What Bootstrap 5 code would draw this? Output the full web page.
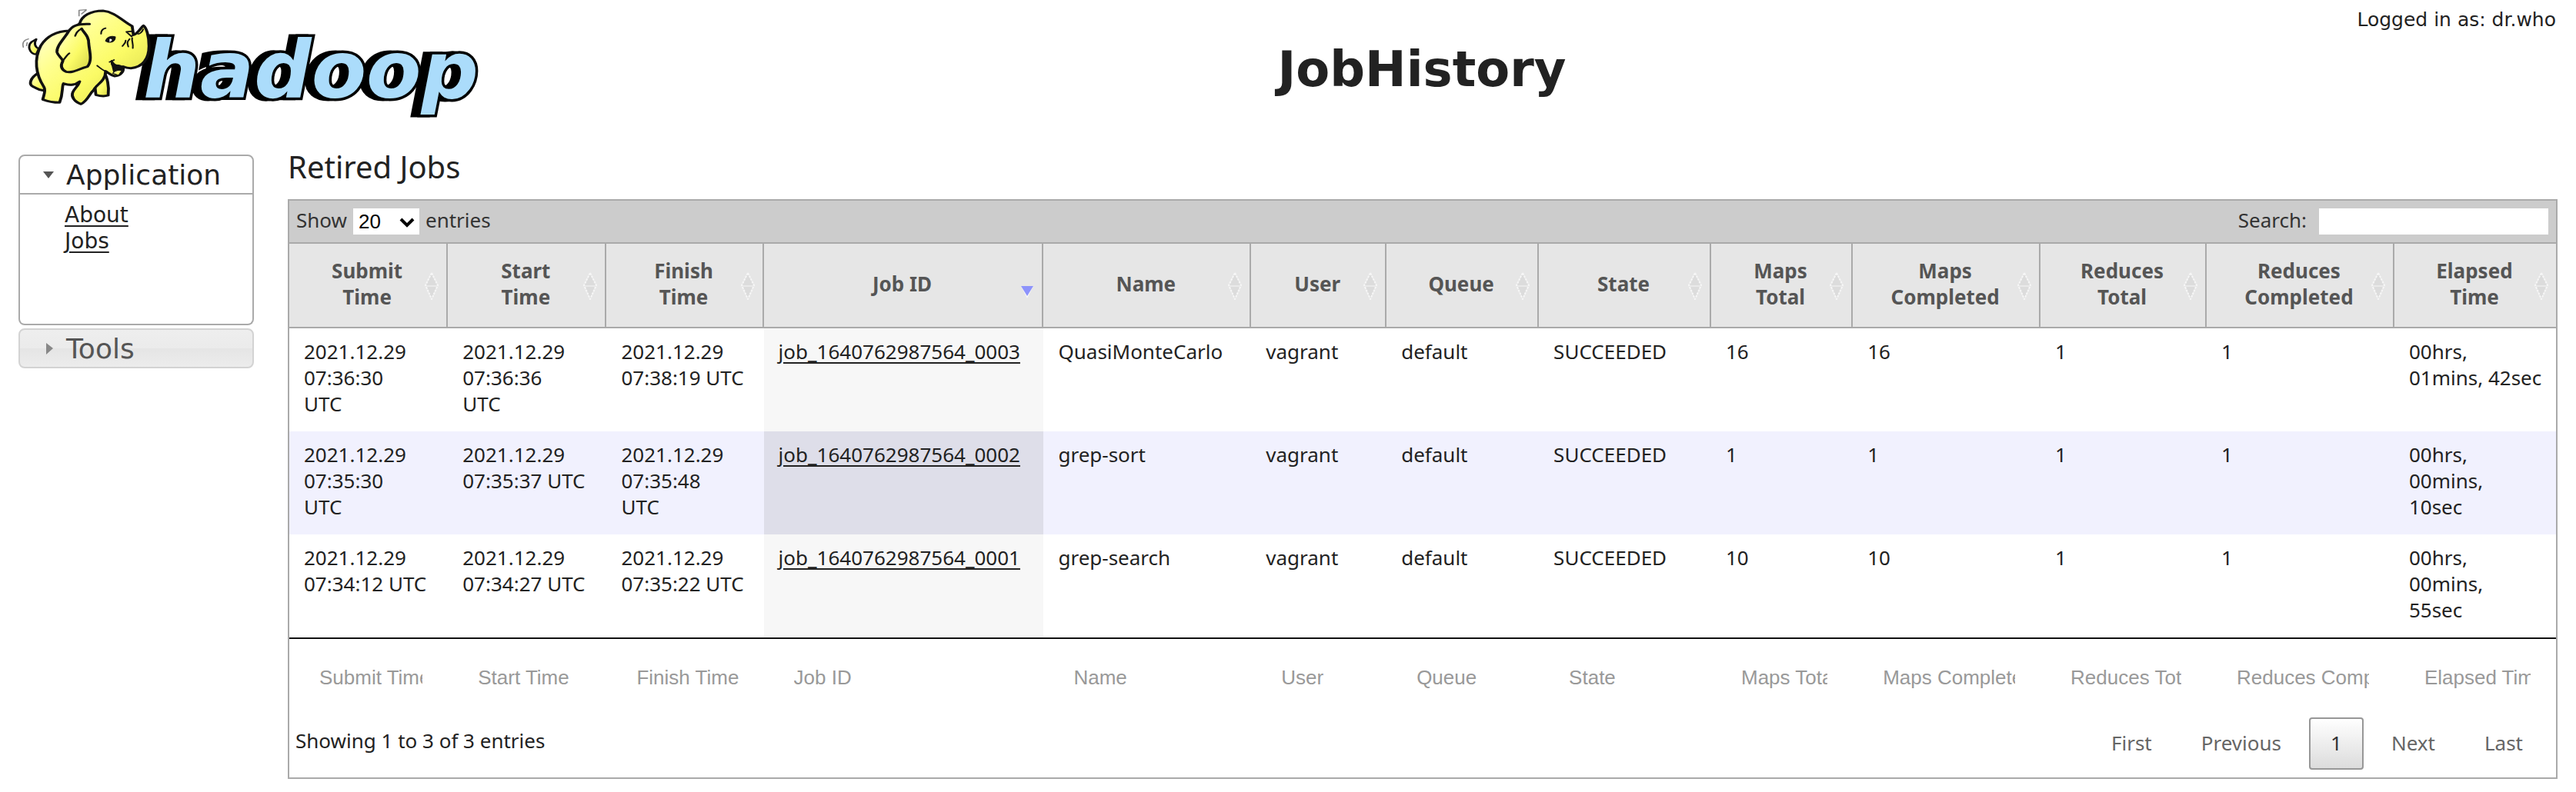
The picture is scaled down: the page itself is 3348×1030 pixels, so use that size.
<!DOCTYPE html>
<html lang="en">
<head>
<meta charset="utf-8">
<meta name="viewport" content="width=device-width, initial-scale=1">
<title>JobHistory</title>
<link href="https://cdn.jsdelivr.net/npm/bootstrap@5.3.0/dist/css/bootstrap.min.css" rel="stylesheet">
<style>
  body { font-family: "Noto Sans", "Open Sans", sans-serif; font-size: 26px; line-height: 34px; color: #222; background: #fff; }
  .verdana { font-family: "DejaVu Sans", Verdana, sans-serif; }
  a { color: #222; text-underline-offset: 4px; text-decoration-thickness: 2px; }

  .page-head { padding: 0 24px; }
  .brand { width: 350px; flex: none; }
  .brand svg { display: block; margin-left: -24px; }
  .page-title { font-size: 64px; line-height: 80px; font-weight: 700; padding-top: 50px; margin: 0; }
  .login-info { font-size: 25px; line-height: 32px; padding: 10px 2px 0 0; }
  .head-side { flex: 1 1 0; min-width: 0; }
  .wordmark { font: italic 700 104px "DejaVu Sans", sans-serif; fill: #abdcfb; stroke: #000; stroke-width: 7px; paint-order: stroke; filter: drop-shadow(-9px 0 0 #000); }

  .page-body { padding: 8px 24px 16px; gap: 44px; }
  .side-nav { width: 306px; flex: none; padding-top: 23px; }
  .nav-head { font-size: 36px; line-height: 46px; font-weight: 400; margin: 0; padding: 2px 0 0 60px; border: 2px solid #aaa; border-radius: 8px 8px 0 0; position: relative; background: #fff; }
  .nav-head a { color: #222; text-decoration: none; }
  .nav-head svg { position: absolute; left: 28px; top: 15px; }
  .nav-head.closed { margin-top: 4px; border-color: #d3d3d3; border-radius: 8px; background: linear-gradient(#eee 0, #ebebeb 50%, #e5e5e5 51%, #ececec 100%); }
  .nav-head.closed a { color: #555; }
  .nav-panel { border: 2px solid #aaa; border-top: 0; border-radius: 0 0 8px 8px; min-height: 170px; padding: 10px 0 0 58px; font-size: 28px; }

  .page-main { min-width: 0; }
  .section-title { font-size: 40px; line-height: 50px; font-weight: 400; margin: 14px 0 17px; }
  .grid-box { border: 2px solid #aaa; }
  .grid-tools { background: #ccc; color: #333; height: 54px; padding: 0 10px 0 9px; }
  .grid-tools label { padding-bottom: 4px; }
  .len-wrap { position: relative; }
  .len-wrap select { appearance: none; display: block; width: 86px; height: 34px; padding: 0 0 0 7px; border: 0; border-radius: 0; background: #fff; color: #000; font: 26px "Liberation Sans", Arial, sans-serif; }
  .len-wrap svg { position: absolute; right: 6px; top: 12px; pointer-events: none; }
  .find-box { width: 298px; height: 34px; border: 0; padding: 0 4px; background: #fff; }

  .jobs { table-layout: fixed; width: 100%; border-collapse: separate; border-spacing: 0; }
  .jobs thead th { position: relative; height: 112px; padding: 18px 21px 22px 19px; text-align: center; vertical-align: middle; color: #555; font-weight: 700; background: #e6e6e6; border-top: 2px solid #aaa; border-bottom: 2px solid #aaa; border-right: 2px solid #aaa; }
  .jobs thead th:last-child { border-right: 0; }
  .jobs thead svg { position: absolute; right: 10px; top: 37px; }
  .jobs tbody td { padding: 13px 0 19px 19px; vertical-align: top; white-space: nowrap; }
  .jobs tbody tr { height: 134px; }
  .jobs tbody .sorted { background: #f7f7f7; }
  .jobs tbody tr.stripe td { background: #f1f1fe; }
  .jobs tbody tr.stripe .sorted { background: #dedee9; }
  .jobs tfoot td { border-top: 2px solid #111; padding: 32px 33px 28px 39px; }
  .jobs tfoot input { display: block; width: 100%; height: 36px; border: 0; padding: 0; background: transparent; font: 26px "Liberation Sans", Arial, sans-serif; }
  .jobs tfoot input::placeholder { color: #999; opacity: 1; }

  .grid-foot { padding: 6px 15px 10px 8px; }
  .pager { gap: 8px; }
  .pager button { height: 68px; padding: 0 26px 2px; border: 2px solid transparent; border-radius: 4px; background: none; color: #666; }
  .pager .current { color: #333; border-color: #979797; background: linear-gradient(#fff, #dcdcdc); }
</style>
<script src="https://cdn.jsdelivr.net/npm/bootstrap@5.3.0/dist/js/bootstrap.bundle.min.js"></script>
</head>
<body>
<svg width="0" height="0" class="position-absolute" aria-hidden="true">
  <symbol id="sort" viewBox="0 0 18 36">
    <path d="M9 1 17 17 9 35 1 17Z" fill="#dcdcdc" stroke="#f6f6f6" stroke-width="2" stroke-dasharray="3 1"/>
    <path d="M2 18H16" stroke="#eaeaea" stroke-width="2"/>
  </symbol>
</svg>

<header class="page-head d-flex align-items-start">
  <div class="brand">
    <svg width="660" height="170" viewBox="0 0 660 170" role="img" aria-label="hadoop">
      <defs>
        <linearGradient id="skin" x1="0" y1="0" x2="1" y2="1">
          <stop offset="0" stop-color="#fffff0"/><stop offset=".35" stop-color="#ffff90"/><stop offset=".6" stop-color="#fbfb66"/><stop offset="1" stop-color="#d2d246"/>
        </linearGradient>
      </defs>
      <text class="wordmark" x="186" y="127">hadoop</text>
      <g transform="scale(.421 .3333)" fill="url(#skin)" stroke="#111" stroke-width="9" stroke-linejoin="round" stroke-linecap="round">
        <path d="M112 212C96 212 86 190 92 172C98 158 106 158 112 153C104 170 108 184 120 190Z" stroke-width="7"/>
        <path d="M118 285C92 305 88 330 102 338C114 344 122 356 136 352L150 300Z"/>
        <path d="M322 285C330 300 338 335 334 372C320 378 306 374 296 370L290 300Z"/>
        <path d="M246 92C252 62 280 42 318 42C355 46 380 84 408 102L412 136C428 130 436 104 443 100C452 108 460 140 460 180C460 230 440 262 404 266C392 266 384 262 380 260C384 282 370 296 354 297C342 294 336 286 326 278C326 318 296 330 290 350C274 368 272 392 250 406C228 396 220 376 224 362C228 346 240 340 246 318C228 336 212 332 196 326C190 340 196 362 184 400C168 400 148 396 132 388C136 368 142 354 136 340C110 290 104 230 126 178C142 146 170 122 214 120Z"/>
        <path d="M276 94C240 92 222 100 210 126C196 154 174 180 176 204C180 220 190 224 194 238C186 256 188 270 204 280C226 286 240 270 270 260C286 236 276 200 274 170C274 140 260 130 252 112" />
        <path d="M252 112C242 118 236 124 232 140M194 238C202 224 208 212 214 208" fill="none" stroke-width="6"/>
        <path d="M344 236C350 246 356 256 366 254C376 256 380 262 380 268C378 280 368 290 356 290C348 280 350 262 344 250Z" fill="#111" stroke-width="4"/>
        <path d="M348 286C354 274 368 272 376 276L366 294Z" stroke-width="3"/>
        <path d="M300 256C310 266 318 276 330 280M246 318C238 334 216 334 196 330M338 242L352 234" fill="none" stroke-width="5"/>
        <path d="M326 160C330 144 344 138 356 144C356 160 346 168 332 164Z" fill="#111" stroke-width="3"/>
        <path d="M338 152C348 150 348 160 338 164Z" fill="#fff" stroke="none"/>
        <path d="M390 124L406 142C414 136 412 128 408 122ZM312 132C312 120 318 112 326 110M388 158C388 170 380 176 378 180M400 152C390 166 394 172 396 182M408 148C406 160 412 170 410 188M426 132C432 134 440 122 442 114" fill="none" stroke-width="5"/>
        <path d="M244 62V40L266 38M252 54L266 40M72 184C68 166 74 156 88 152M82 178L84 166" fill="none" stroke="#888" stroke-width="4"/>
      </g>
    </svg>
  </div>
  <div class="head-side"></div>
  <h1 class="page-title verdana">JobHistory</h1>
  <div class="head-side text-end verdana login-info">Logged in as: dr.who</div>
</header>

<div class="page-body d-flex">
  <nav class="side-nav verdana" aria-label="Sections">
    <h3 class="nav-head"><svg width="18" height="18" aria-hidden="true"><path d="M2 5H16L9 14Z" fill="#555"/></svg><a href="#app">Application</a></h3>
    <ul class="nav-panel list-unstyled m-0" id="app">
      <li><a href="#about">About</a></li>
      <li><a href="#jobs">Jobs</a></li>
    </ul>
    <h3 class="nav-head closed"><svg width="18" height="18" aria-hidden="true"><path d="M6 2V17L15 9Z" fill="#888"/></svg><a href="#tools">Tools</a></h3>
  </nav>

  <main class="page-main flex-grow-1">
    <h2 class="section-title">Retired Jobs</h2>
    <div class="grid-box">
      <div class="grid-tools d-flex align-items-center justify-content-between">
        <div class="d-flex align-items-center">
          <label for="len" class="me-2">Show</label>
          <div class="len-wrap">
            <select id="len"><option>20</option><option>40</option><option>60</option></select>
            <svg width="20" height="13" aria-hidden="true"><path d="M2 2 10 10 18 2" fill="none" stroke="#000" stroke-width="4"/></svg>
          </div>
          <label for="len" class="ms-2">entries</label>
        </div>
        <div class="d-flex align-items-center">
          <label for="find" class="me-3">Search:</label>
          <input id="find" class="find-box" type="search">
        </div>
      </div>

      <table class="jobs" id="jobs">
        <colgroup>
          <col style="width:7%"><col style="width:7%"><col style="width:6.93%"><col style="width:12.35%"><col style="width:9.16%"><col style="width:5.97%"><col style="width:6.72%"><col style="width:7.6%"><col style="width:6.25%"><col style="width:8.28%"><col style="width:7.33%"><col style="width:8.28%"><col>
        </colgroup>
        <thead>
          <tr>
            <th scope="col">Submit<br>Time<svg width="18" height="36"><use href="#sort"/></svg></th>
            <th scope="col">Start<br>Time<svg width="18" height="36"><use href="#sort"/></svg></th>
            <th scope="col">Finish<br>Time<svg width="18" height="36"><use href="#sort"/></svg></th>
            <th scope="col" aria-sort="descending">Job ID<svg width="18" height="36"><path d="M1 18H17L9 34Z" fill="#f8f8f8"/><path d="M1 18H17L9 31Z" fill="#8d93fb"/></svg></th>
            <th scope="col">Name<svg width="18" height="36"><use href="#sort"/></svg></th>
            <th scope="col">User<svg width="18" height="36"><use href="#sort"/></svg></th>
            <th scope="col">Queue<svg width="18" height="36"><use href="#sort"/></svg></th>
            <th scope="col">State<svg width="18" height="36"><use href="#sort"/></svg></th>
            <th scope="col">Maps<br>Total<svg width="18" height="36"><use href="#sort"/></svg></th>
            <th scope="col">Maps<br>Completed<svg width="18" height="36"><use href="#sort"/></svg></th>
            <th scope="col">Reduces<br>Total<svg width="18" height="36"><use href="#sort"/></svg></th>
            <th scope="col">Reduces<br>Completed<svg width="18" height="36"><use href="#sort"/></svg></th>
            <th scope="col">Elapsed<br>Time<svg width="18" height="36"><use href="#sort"/></svg></th>
          </tr>
        </thead>
        <tbody>
          <tr>
            <td>2021.12.29<br>07:36:30<br>UTC</td><td>2021.12.29<br>07:36:36<br>UTC</td><td>2021.12.29<br>07:38:19 UTC</td>
            <td class="sorted"><a href="#job3">job_1640762987564_0003</a></td><td>QuasiMonteCarlo</td><td>vagrant</td><td>default</td><td>SUCCEEDED</td>
            <td>16</td><td>16</td><td>1</td><td>1</td><td>00hrs,<br>01mins, 42sec</td>
          </tr>
          <tr class="stripe">
            <td>2021.12.29<br>07:35:30<br>UTC</td><td>2021.12.29<br>07:35:37 UTC</td><td>2021.12.29<br>07:35:48<br>UTC</td>
            <td class="sorted"><a href="#job2">job_1640762987564_0002</a></td><td>grep-sort</td><td>vagrant</td><td>default</td><td>SUCCEEDED</td>
            <td>1</td><td>1</td><td>1</td><td>1</td><td>00hrs,<br>00mins,<br>10sec</td>
          </tr>
          <tr>
            <td>2021.12.29<br>07:34:12 UTC</td><td>2021.12.29<br>07:34:27 UTC</td><td>2021.12.29<br>07:35:22 UTC</td>
            <td class="sorted"><a href="#job1">job_1640762987564_0001</a></td><td>grep-search</td><td>vagrant</td><td>default</td><td>SUCCEEDED</td>
            <td>10</td><td>10</td><td>1</td><td>1</td><td>00hrs,<br>00mins,<br>55sec</td>
          </tr>
        </tbody>
        <tfoot>
          <tr>
            <td><input type="text" placeholder="Submit Time" aria-label="Submit Time"></td>
            <td><input type="text" placeholder="Start Time" aria-label="Start Time"></td>
            <td><input type="text" placeholder="Finish Time" aria-label="Finish Time"></td>
            <td><input type="text" placeholder="Job ID" aria-label="Job ID"></td>
            <td><input type="text" placeholder="Name" aria-label="Name"></td>
            <td><input type="text" placeholder="User" aria-label="User"></td>
            <td><input type="text" placeholder="Queue" aria-label="Queue"></td>
            <td><input type="text" placeholder="State" aria-label="State"></td>
            <td><input type="text" placeholder="Maps Total" aria-label="Maps Total"></td>
            <td><input type="text" placeholder="Maps Completed" aria-label="Maps Completed"></td>
            <td><input type="text" placeholder="Reduces Total" aria-label="Reduces Total"></td>
            <td><input type="text" placeholder="Reduces Completed" aria-label="Reduces Completed"></td>
            <td><input type="text" placeholder="Elapsed Time" aria-label="Elapsed Time"></td>
          </tr>
        </tfoot>
      </table>

      <div class="grid-foot d-flex align-items-center justify-content-between">
        <div class="pb-2">Showing 1 to 3 of 3 entries</div>
        <div class="pager d-flex">
          <button type="button">First</button>
          <button type="button">Previous</button>
          <button type="button" class="current">1</button>
          <button type="button">Next</button>
          <button type="button">Last</button>
        </div>
      </div>
    </div>
  </main>
</div>
</body>
</html>
